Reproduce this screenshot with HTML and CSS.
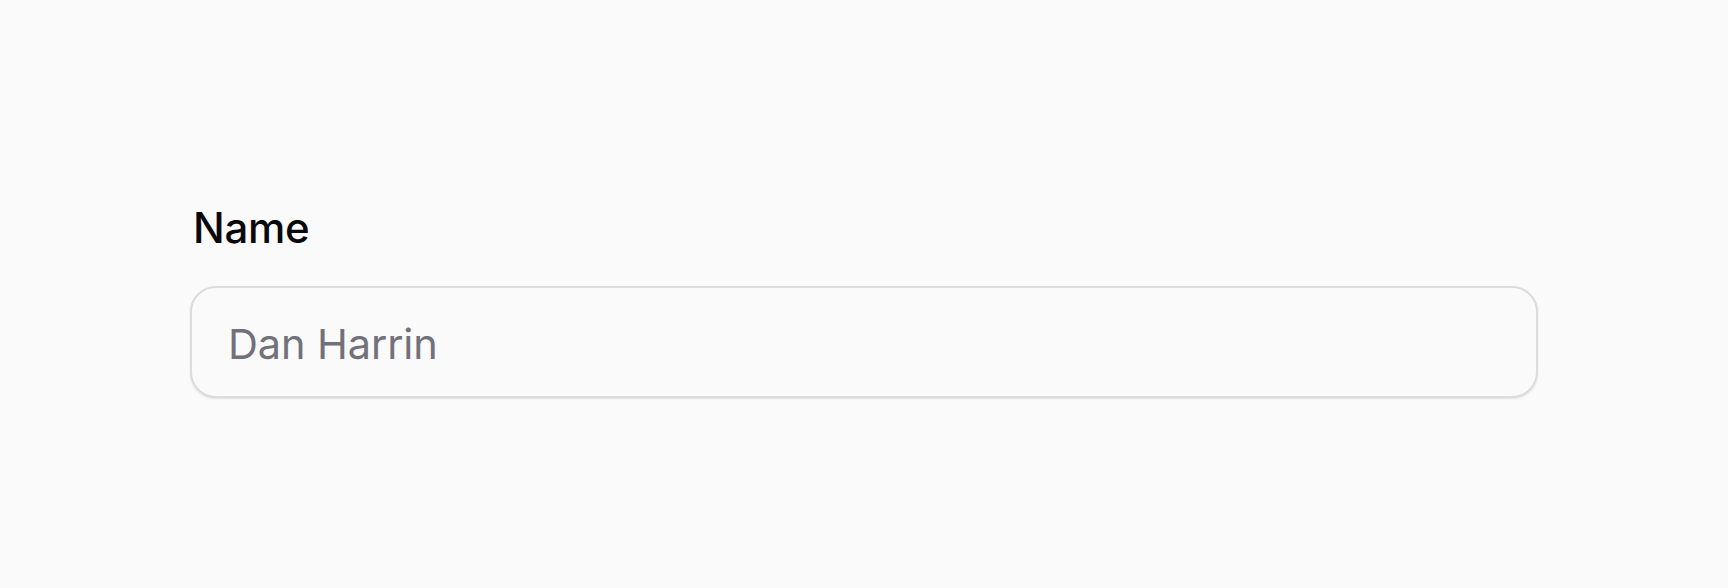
FILE: index.html
```html
<!DOCTYPE html>
<html lang="en">
<head>
    <meta charset="UTF-8">
    <meta name="viewport" content="width=device-width, initial-scale=1.0">
    <title>Name field</title>
    <link rel="stylesheet" href="styles.css">
</head>
<body>
    <div class="field">
        <label class="field-label" for="name">Name</label>
        <input class="field-input" type="text" id="name" placeholder="Dan Harrin">
    </div>
</body>
</html>
```

FILE: styles.css
```css
html, body {
    margin: 0;
    padding: 0;
}
body {
    font-family: Inter, "Noto Sans", sans-serif;
    background-color: #fafafa;
    color: #09090b;
    height: 588px;
    box-sizing: border-box;
    padding-top: 207px;
}
.field {
    width: 1348px;
    margin: 0 auto;
    display: flex;
    flex-direction: column;
    gap: 37px;
}
.field-label {
    font-size: 42px;
    line-height: 42px;
    font-weight: 500;
    padding-left: 3px;
    letter-spacing: -0.3px;
}
.field-input {
    box-sizing: border-box;
    width: 100%;
    height: 112px;
    padding: 3px 36px 0;
    font-family: inherit;
    font-size: 41.5px;
    letter-spacing: -0.1px;
    color: #09090b;
    background-color: #fafafa;
    border: 2px solid #dcdcde;
    border-radius: 26px;
    box-shadow: 0 1px 2px rgba(0, 0, 0, 0.1);
    outline: none;
}
.field-input::placeholder {
    color: #71717a;
    opacity: 1;
}
```
